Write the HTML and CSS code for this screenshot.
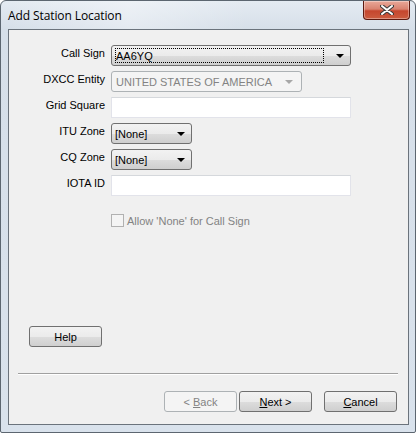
FILE: index.html
```html
<!DOCTYPE html>
<html>
<head>
<meta charset="utf-8">
<link rel="stylesheet" href="styles.css">
</head>
<body>
<div class="window">
  <div class="titlebar">
    <span class="title">Add Station Location</span>
    <div class="close">
      <svg width="14" height="10" viewBox="0 0 14 10">
        <path d="M2 1 L12 9 M12 1 L2 9" stroke="#3a3a3a" stroke-width="4" stroke-linecap="round"/>
        <path d="M2 1 L12 9 M12 1 L2 9" stroke="#ffffff" stroke-width="2" stroke-linecap="round"/>
      </svg>
    </div>
  </div>
  <div class="client">
    <div class="form">
      <label class="lbl">Call Sign</label>
      <div class="combo wide focus"><span class="val"><span class="focusbox">AA6YQ</span></span><span class="arrow"></span></div>

      <label class="lbl">DXCC Entity</label>
      <div class="combo mid disabled"><span class="val">UNITED STATES OF AMERICA</span><span class="arrow"></span></div>

      <label class="lbl">Grid Square</label>
      <div class="input wide"></div>

      <label class="lbl">ITU Zone</label>
      <div class="combo small"><span class="val">[None]</span><span class="arrow"></span></div>

      <label class="lbl">CQ Zone</label>
      <div class="combo small"><span class="val">[None]</span><span class="arrow"></span></div>

      <label class="lbl">IOTA ID</label>
      <div class="input wide"></div>
    </div>

    <div class="checkrow">
      <span class="checkbox"></span>
      <span class="checklabel">Allow 'None' for Call Sign</span>
    </div>

    <div class="helprow">
      <div class="btn"><span>Help</span></div>
    </div>

    <div class="separator"></div>

    <div class="navrow">
      <div class="btn disabled"><span>&lt; <u>B</u>ack</span></div>
      <div class="btn next"><span><u>N</u>ext &gt;</span></div>
      <div class="btn cancel"><span><u>C</u>ancel</span></div>
    </div>
  </div>
</div>
</body>
</html>
```

FILE: styles.css
```css
* { box-sizing: border-box; }
html, body {
  margin: 0;
  padding: 0;
  width: 416px;
  height: 433px;
  overflow: hidden;
  background: #ffffff;
}
.window {
  width: 416px;
  height: 433px;
  border: 1px solid #5c6670;
  border-radius: 6px 6px 2px 2px;
  background: linear-gradient(to bottom, #e4ebf2 0px, #d6dfe9 28px, #d9e2ec 100%);
  padding: 0 6px 7px 7px;
  display: flex;
  flex-direction: column;
  font-family: "Liberation Sans", Arial, sans-serif;
  font-size: 11px;
  color: #000;
}
.titlebar {
  height: 28px;
  display: flex;
  align-items: flex-start;
  justify-content: space-between;
  background: linear-gradient(to right, rgba(255,255,255,0) 0%, rgba(255,255,255,0.35) 30%, rgba(255,255,255,0) 60%);
}
.title {
  font-family: "Open Sans", "Segoe UI", sans-serif;
  font-size: 12px;
  margin-top: 6px;
  color: #000;
  letter-spacing: -0.1px;
}
.close {
  width: 47px;
  height: 19px;
  margin-right: -1px;
  border: 1px solid #5d1a10;
  border-top: none;
  border-radius: 0 0 4px 4px;
  background: linear-gradient(to bottom, #e9a899 0%, #d98370 45%, #c5462e 55%, #cc5c3f 100%);
  box-shadow: inset 0 0 0 1px rgba(255,255,255,0.35);
  display: flex;
  align-items: center;
  justify-content: center;
}
.client {
  flex: 1;
  border: 1px solid #6b737c;
  background: #f0f0f0;
  display: flex;
  flex-direction: column;
  padding: 15px 0 0 0;
}
.form {
  display: grid;
  grid-template-columns: 96px auto;
  column-gap: 6px;
  row-gap: 5px;
  justify-items: start;
}
.lbl {
  justify-self: end;
  padding-top: 2px;
  height: 21px;
}
.combo, .input {
  height: 21px;
  display: flex;
  align-items: center;
}
.wide { width: 240px; }
.mid { width: 191px; }
.small { width: 81px; }
.combo {
  border: 1px solid #707070;
  border-radius: 3px;
  background: linear-gradient(to bottom, #f2f2f2 0%, #ebebeb 50%, #dddddd 51%, #cfcfcf 100%);
  padding: 0 3px;
  justify-content: space-between;
}
.combo .val { flex: 1; display: flex; align-items: center; height: 100%; padding: 2px 0; }
.combo .arrow {
  width: 0; height: 0;
  border-left: 4px solid transparent;
  border-right: 4px solid transparent;
  border-top: 4px solid #000;
  margin-right: 3px;
}
.combo.focus .val { padding: 2px 12px 2px 0; }
.focusbox {
  flex: 1;
  height: 100%;
  border: 1px dotted #000;
  display: flex;
  align-items: center;
}
.combo.disabled {
  border-color: #adb2b5;
  background: #f4f4f4;
  color: #838383;
}
.combo.disabled .val { padding-left: 1px; }
.combo.disabled .arrow { border-top-color: #a7a7a7; margin-right: 5px; }
.input {
  background: #ffffff;
  border: 1px solid #e2e3ea;
  border-top-color: #d5d8dc;
}
.checkrow {
  display: flex;
  align-items: center;
  margin: 18px 0 0 102px;
  height: 13px;
  color: #838383;
}
.checkbox {
  width: 13px;
  height: 13px;
  border: 1px solid #b1b1b1;
  background: #f4f4f4;
  margin-right: 3px;
}
.helprow {
  margin: 99px 0 0 20px;
}
.btn {
  width: 73px;
  height: 21px;
  border: 1px solid #707070;
  border-radius: 3px;
  background: linear-gradient(to bottom, #f2f2f2 0%, #ebebeb 50%, #dddddd 51%, #cfcfcf 100%);
  display: flex;
  align-items: center;
  justify-content: center;
  color: #000;
}
.btn.disabled {
  border-color: #adb2b5;
  background: #f4f4f4;
  color: #838383;
}
.separator {
  margin: 26px 10px 0 9px;
  background: #a0a0a0;
  border-bottom: 1px solid #ffffff;
  height: 2px;
}
.navrow {
  display: flex;
  margin: 16px 0 0 155px;
}
.next { margin-left: 2px; }
.cancel { margin-left: 12px; }
```
